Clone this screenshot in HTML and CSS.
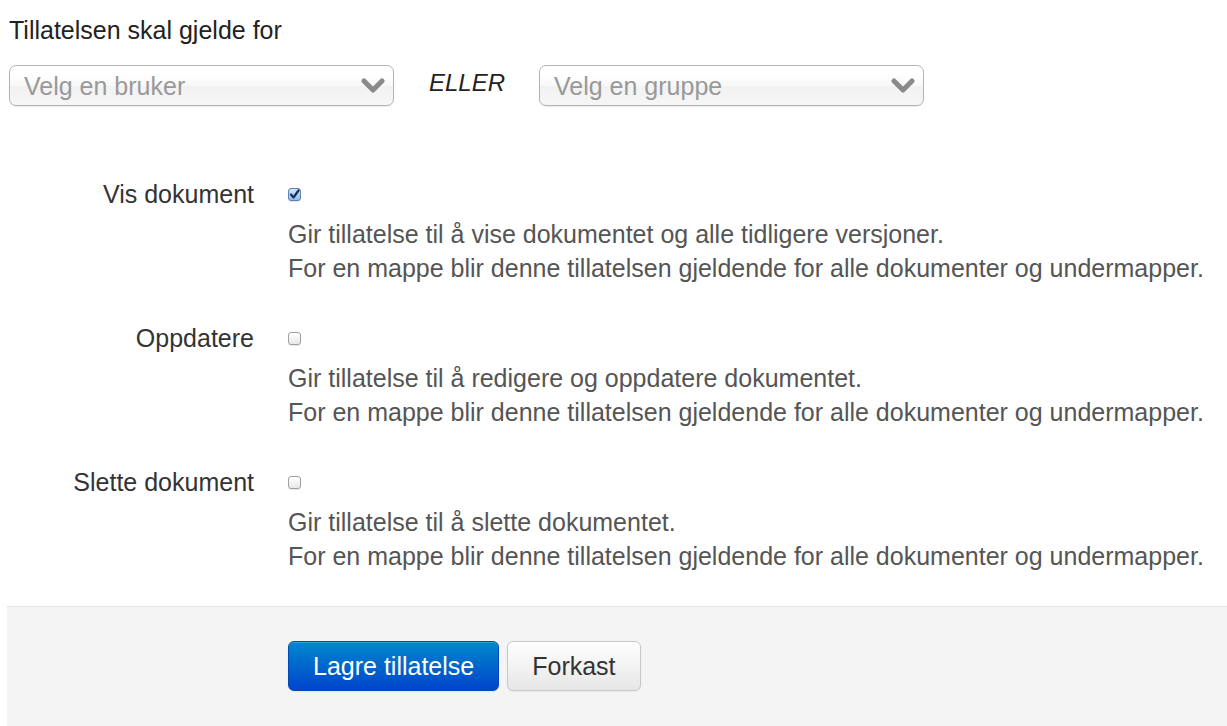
FILE: index.html
```html
<!DOCTYPE html>
<html lang="no">
<head>
    <meta charset="UTF-8">
    <meta name="viewport" content="width=device-width, initial-scale=1.0">
    <title>Tillatelse</title>
    <link rel="stylesheet" href="styles.css">
</head>
<body>
    <form class="permission-form">
        <div class="target">
            <p class="target-title">Tillatelsen skal gjelde for</p>
            <div class="target-row">
                <div class="chosen">
                    <span>Velg en bruker</span>
                    <svg class="chevron" width="24" height="16" viewBox="0 0 24 16"><polyline points="3,3 12,12 21,3" fill="none" stroke="#8a8a8a" stroke-width="5" stroke-linecap="round" stroke-linejoin="round"/></svg>
                </div>
                <em class="or">ELLER</em>
                <div class="chosen">
                    <span>Velg en gruppe</span>
                    <svg class="chevron" width="24" height="16" viewBox="0 0 24 16"><polyline points="3,3 12,12 21,3" fill="none" stroke="#8a8a8a" stroke-width="5" stroke-linecap="round" stroke-linejoin="round"/></svg>
                </div>
            </div>
        </div>

        <div class="control-group">
            <label class="control-label">Vis dokument</label>
            <div class="controls">
                <div class="check-line">
                    <span class="checkbox checked">
                        <svg width="11" height="11" viewBox="0 0 11 11"><polyline points="2,5.5 4.5,8.5 9.5,1.5" fill="none" stroke="#16305a" stroke-width="2.2" stroke-linecap="round" stroke-linejoin="round"/></svg>
                    </span>
                </div>
                <p class="help-block">Gir tillatelse til å vise dokumentet og alle tidligere versjoner.<br>For en mappe blir denne tillatelsen gjeldende for alle dokumenter og undermapper.</p>
            </div>
        </div>

        <div class="control-group">
            <label class="control-label">Oppdatere</label>
            <div class="controls">
                <div class="check-line"><span class="checkbox"></span></div>
                <p class="help-block">Gir tillatelse til å redigere og oppdatere dokumentet.<br>For en mappe blir denne tillatelsen gjeldende for alle dokumenter og undermapper.</p>
            </div>
        </div>

        <div class="control-group">
            <label class="control-label">Slette dokument</label>
            <div class="controls">
                <div class="check-line"><span class="checkbox"></span></div>
                <p class="help-block">Gir tillatelse til å slette dokumentet.<br>For en mappe blir denne tillatelsen gjeldende for alle dokumenter og undermapper.</p>
            </div>
        </div>

        <div class="form-actions">
            <button type="button" class="btn btn-primary">Lagre tillatelse</button>
            <button type="button" class="btn">Forkast</button>
        </div>
    </form>
</body>
</html>
```

FILE: styles.css
```css
/* General */
* {
    margin: 0;
    padding: 0;
    box-sizing: border-box;
}

body {
    font-family: "Liberation Sans", Arial, sans-serif;
    font-size: 25px;
    line-height: 34px;
    color: #333;
    background: #fff;
}

.permission-form {
    padding: 13px 0 0 9px;
}

/* Target pickers */
.target-title {
    color: #222;
    margin-bottom: 18px;
}

.target-row {
    display: flex;
    align-items: center;
}

.chosen {
    width: 385px;
    height: 41px;
    display: flex;
    align-items: center;
    justify-content: space-between;
    padding: 0 8px 0 14px;
    border: 1px solid #b4b4b4;
    border-radius: 7px;
    background: linear-gradient(#fff 20%, #f8f8f8 50%, #f2f2f2 52%, #f6f6f6 100%);
    box-shadow: 0 1px 1px rgba(0, 0, 0, 0.08);
    color: #999;
}

.chevron {
    display: block;
}

.or {
    width: 110px;
    margin: -6px 0 0 35px;
    font-size: 24px;
    color: #222;
}

/* Permission rows */
.control-group {
    display: grid;
    grid-template-columns: 245px 1fr;
    column-gap: 34px;
    margin-top: 36px;
}

.target + .control-group {
    margin-top: 71px;
}

.control-label {
    text-align: right;
    color: #333;
}

.check-line {
    height: 34px;
    display: flex;
    align-items: center;
}

.checkbox {
    width: 13px;
    height: 13px;
    display: flex;
    align-items: center;
    justify-content: center;
    border: 1px solid #a0a0a0;
    border-radius: 3px;
    background: linear-gradient(#fff, #e8e8e8);
    box-shadow: 0 1px 1px rgba(0, 0, 0, 0.1);
}

.checkbox.checked {
    border-color: #5a7fb0;
    background: linear-gradient(#d3e6fb, #8fbcef);
}

.help-block {
    margin-top: 6px;
    color: #555;
}

/* Actions */
.form-actions {
    margin: 33px 0 0 -2px;
    padding: 34px 0 40px 281px;
    border-top: 1px solid #e5e5e5;
    background: #f4f4f4;
    display: flex;
    gap: 8px;
}

.btn {
    font-family: inherit;
    font-size: 25px;
    line-height: 34px;
    padding: 7px 24px;
    border: 1px solid #c8c8c8;
    border-radius: 6px;
    background: linear-gradient(#fff, #e6e6e6);
    color: #333;
    box-shadow: inset 0 1px 0 rgba(255, 255, 255, 0.2), 0 1px 2px rgba(0, 0, 0, 0.05);
    cursor: pointer;
}

.btn-primary {
    color: #fff;
    border-color: #0049b8;
    background: linear-gradient(#0088cc, #0044cc);
}
```
